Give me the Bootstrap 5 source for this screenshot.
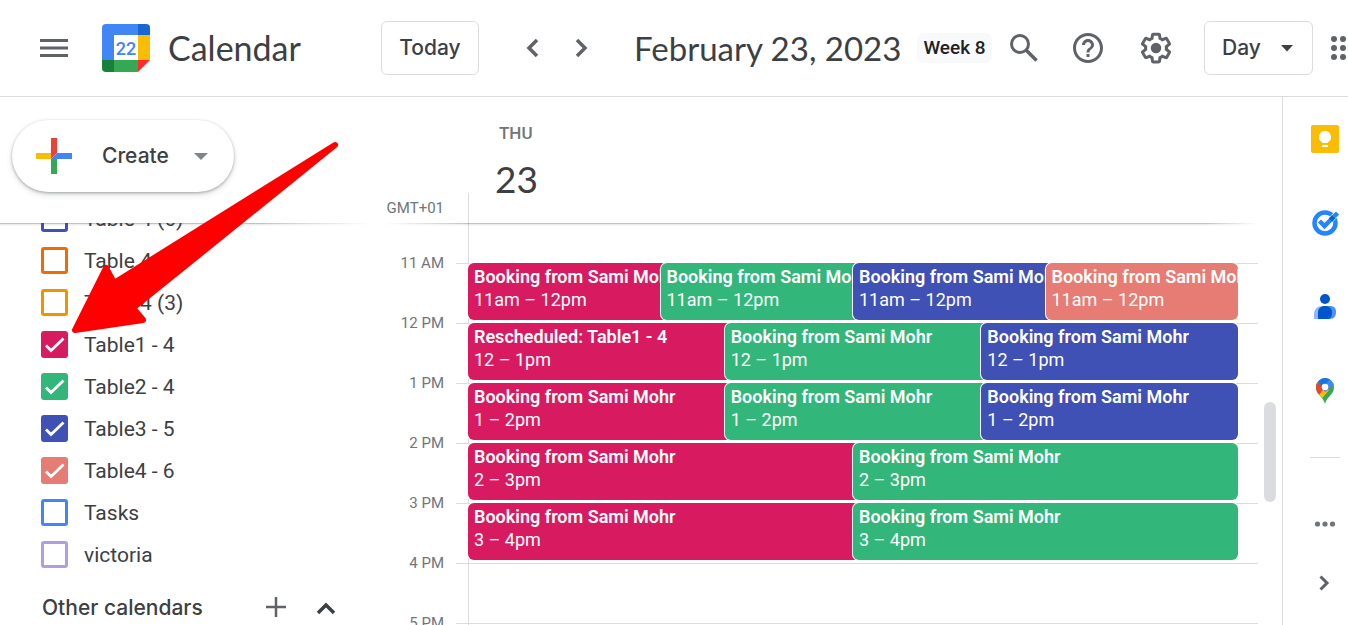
<!DOCTYPE html>
<html lang="en">
<head>
<meta charset="utf-8">
<meta name="viewport" content="width=device-width, initial-scale=1">
<title>Calendar - February 23, 2023</title>
<link href="https://cdn.jsdelivr.net/npm/bootstrap@5.3.0/dist/css/bootstrap.min.css" rel="stylesheet">
<style>
:root{--ink:#3c4043;--soft:#5f6368;--mute:#70757a;--line:#dadce0;--pink:#d81b60;--green:#33b679;--indigo:#3f51b5;--coral:#e67c73}
body{font-family:Roboto,"Liberation Sans",sans-serif;color:var(--ink);height:100vh;background:#fff}
.brand-font{font-family:Lato,Roboto,sans-serif}
.plain{border:0;background:none;padding:0;display:flex;align-items:center;justify-content:center;color:var(--soft);flex:none}
svg{display:block;flex:none}
.topbar{height:97px;border-bottom:1px solid var(--line)}
.top-left{width:381px;padding-left:36px}
.headline{font-size:34px;line-height:48px;white-space:nowrap;font-weight:400}
h1.headline{font-size:33px}
.outlined,.create,.other h2{font-family:Inter,Roboto,sans-serif;font-size:21px;font-weight:500}
.outlined{height:54px;border:1px solid var(--line);border-radius:6px;background:#fff;color:var(--ink)}
.today{width:98px}
.week{font-size:19px;line-height:30px;font-weight:500;background:#f8f9fa;border-radius:6px;padding:0 6px;color:#202124;white-space:nowrap}
.stepper{margin:0 25px 0 30px}
.nav-step{width:48px;height:48px}
.view-select{width:109px;padding:0 17px;appearance:none}
.select-wrap{position:relative;flex:none;margin-left:6px}
.select-wrap svg{position:absolute;right:19px;top:24px;pointer-events:none}
.tools{margin-right:-13px}
.sidebar{width:372px}
.create-zone{height:126px;padding:23px 12px}
.create{width:222px;height:72px;border:0;border-radius:36px;background:#fff;color:var(--ink);box-shadow:0 1px 3px rgba(60,64,67,.4),0 3px 6px rgba(60,64,67,.15)}
.create span{width:92px;margin:0 0 0 30px;text-align:left}
.fade-line{height:3px;flex:none;margin-bottom:-3px;position:relative;z-index:2;background:linear-gradient(rgba(60,64,67,.32) 1px,rgba(60,64,67,.12) 1px,rgba(60,64,67,.02) 3px);-webkit-mask-image:linear-gradient(90deg,#000 70%,transparent)}
.fade-both{-webkit-mask-image:linear-gradient(90deg,transparent 12px,#000 100px,#000 94%,transparent)}
.calendars{margin-top:-26px}
.cal-row{height:42px;padding-left:41px;gap:16px;font-size:21px}
.cal-row .form-check-input{width:27px;height:27px;margin:0;border:3px solid var(--c);border-radius:3px;background-color:#fff;flex:none}
.cal-row .form-check-input:checked{background-color:var(--c);background-origin:border-box;background-size:27px;background-image:url("data:image/svg+xml,%3Csvg xmlns='http://www.w3.org/2000/svg' viewBox='0 0 27 27'%3E%3Cpath d='M5 14.500l5 5L22.500 7.500' fill='none' stroke='%23fff' stroke-width='2.800'/%3E%3C/svg%3E")}
.other{height:66px;padding-left:42px}
.other h2{width:218px}
.gutter{width:96px;flex:none}
.gmt{font-size:15px;color:var(--mute);padding:0 24px 5px 0;line-height:20px}
.day-head{height:126px}
.day-name{font-size:17px;font-weight:500;color:var(--mute);line-height:24px;padding:24px 0 0 30px}
.day-num{font-size:37px;line-height:48px;padding:10px 0 0 26px}
.tick-up{height:30px;width:1px;background:var(--line)}
.hour{height:60px}
.hour-first{height:40px}
.hour-first .slot{border-top:0}
.hour-label{width:84px;flex:none;text-align:right;padding-right:12px;font-size:15px;line-height:20px;margin-top:-10px;color:var(--mute)}
.hour-tick{width:12px;border-top:1px solid var(--line);flex:none}
.slot{border-top:1px solid var(--line);border-left:1px solid var(--line);padding-right:20px;min-width:0}
.slot ul{margin:-1px 0 0 -1px}
.slot li{flex:1 1 0;min-width:0}
.ev{display:block;width:calc(100% + 7px);height:57px;border:0;border-radius:6px;color:#fff;background:var(--c);box-shadow:0 0 0 1px #fff;text-align:left;padding:2px 0 9px 6px;font-size:18px;line-height:23px;overflow:hidden;white-space:nowrap;position:relative}
li:last-child>.ev{width:100%}
.ev b{font-weight:600;display:block}
.scroll-lane{width:24px;flex:none;padding-top:305px}
.thumb{width:12px;height:100px;border-radius:6px;background:var(--line);margin-left:6px}
.rail{width:66px;border-left:1px solid var(--line);padding-top:18px}
.rail .plain{width:48px;height:48px;margin:0 0 36px 18px}
.rail hr{width:30px;margin:6px 0 42px 27px;border-color:var(--line);opacity:1;flex:none}
.pointer{position:absolute;left:0;top:0;pointer-events:none;z-index:3}
.pink{--c:var(--pink)}.green{--c:var(--green)}.indigo{--c:var(--indigo)}.coral{--c:var(--coral)}
</style>
</head>
<body class="d-flex flex-column overflow-hidden position-relative">
<header class="topbar d-flex align-items-center flex-shrink-0">
  <div class="top-left d-flex align-items-center flex-shrink-0">
    <button class="plain" aria-label="Main menu"><svg width="36" height="36" viewBox="0 0 36 36" fill="currentColor"><path d="M4 9h28v3H4zM4 16.500h28v3H4zM4 24h28v3H4z"/></svg></button>
    <svg class="ms-4 me-2" width="60" height="60" viewBox="0 0 60 60"><path d="M6 18V10a4 4 0 0 1 4-4h32v12z" fill="#4285f4"/><path d="M6 17h12v25H6z" fill="#4285f4"/><path d="M18 17h25v26H18z" fill="#fff"/><path d="M42 6h8a4 4 0 0 1 4 4v7H42z" fill="#1967d2"/><path d="M42 17h12v25H42z" fill="#fbbc04"/><path d="M42 42h12L42 54z" fill="#ff2a2a"/><path d="M17 42h25v12H17z" fill="#34a853"/><path d="M6 42h12v12h-8a4 4 0 0 1-4-4z" fill="#188038"/><text x="30" y="37" text-anchor="middle" font-family="Roboto" font-size="18" font-weight="500" fill="#4285f4">22</text></svg>
    <span class="headline brand-font ms-1">Calendar</span>
  </div>
  <button class="outlined today p-0 flex-shrink-0">Today</button>
  <div class="stepper d-flex">
    <button class="plain nav-step" aria-label="Previous day"><svg width="36" height="36" viewBox="0 0 36 36" fill="none" stroke="currentColor" stroke-width="3.500"><path d="M22 10l-8 8 8 8"/></svg></button>
    <button class="plain nav-step" aria-label="Next day"><svg width="36" height="36" viewBox="0 0 36 36" fill="none" stroke="currentColor" stroke-width="3.500"><path d="M14 10l8 8-8 8"/></svg></button>
  </div>
  <h1 class="headline brand-font mb-0 ms-1 me-3">February 23, 2023</h1>
  <span class="week">Week 8</span>
  <div class="tools d-flex align-items-center ms-auto flex-shrink-0">
    <button class="plain" aria-label="Search"><svg width="36" height="36" viewBox="0 0 36 36" fill="none" stroke="currentColor"><circle cx="14" cy="14" r="8.500" stroke-width="3"/><path d="M20 20l10.500 10.500" stroke-width="3.500"/></svg></button>
    <button class="plain ms-4 ps-1" aria-label="Support"><svg width="36" height="36" viewBox="0 0 24 24" fill="currentColor"><path d="M11 18h2v-2h-2v2zm1-16C6.480 2 2 6.480 2 12s4.480 10 10 10 10-4.480 10-10S17.520 2 12 2zm0 18c-4.410 0-8-3.590-8-8s3.590-8 8-8 8 3.590 8 8-3.590 8-8 8zm0-14c-2.210 0-4 1.790-4 4h2c0-1.100.9-2 2-2s2 .9 2 2c0 2-3 1.750-3 5h2c0-2.250 3-2.500 3-5 0-2.210-1.790-4-4-4z"/></svg></button>
    <button class="plain ms-4 ps-2 me-4" aria-label="Settings"><svg width="36" height="36" viewBox="0 0 24 24" fill="currentColor"><path d="M13.850 22.250h-3.700c-.74 0-1.360-.54-1.450-1.270l-.27-1.890c-.27-.14-.53-.29-.79-.46l-1.800.72c-.7.260-1.470-.03-1.810-.65L2.200 15.530c-.35-.66-.2-1.440.36-1.880l1.530-1.190c-.01-.15-.02-.3-.02-.46 0-.15.010-.31.020-.46l-1.520-1.190c-.59-.45-.74-1.260-.37-1.880l1.850-3.190c.34-.62 1.110-.9 1.790-.63l1.810.73c.26-.17.520-.32.780-.46l.27-1.910c.09-.7.710-1.250 1.440-1.250h3.700c.74 0 1.360.54 1.450 1.270l.27 1.890c.27.140.53.290.79.460l1.800-.72c.71-.26 1.480.03 1.820.65l1.840 3.180c.36.660.2 1.440-.36 1.880l-1.520 1.190c.1.150.2.300.2.460s-.1.310-.2.460l1.520 1.190c.56.450.72 1.230.37 1.860l-1.860 3.220c-.34.620-1.110.9-1.800.63l-1.800-.72c-.26.170-.52.320-.78.460l-.27 1.910c-.1.680-.72 1.220-1.460 1.220zm-3.230-2h2.760l.37-2.550.53-.22c.44-.18.880-.44 1.340-.78l.45-.34 2.380.96 1.380-2.400-2.030-1.580.07-.56c.03-.26.060-.51.060-.78s-.03-.53-.06-.78l-.07-.56 2.030-1.580-1.390-2.400-2.390.96-.45-.35c-.42-.32-.87-.58-1.330-.77l-.52-.22-.37-2.550h-2.760l-.37 2.550-.53.210c-.44.190-.88.440-1.340.79l-.45.330-2.380-.95-1.390 2.390 2.030 1.580-.07.560a7 7 0 0 0-.06.790c0 .26.020.53.060.78l.07.560-2.030 1.580 1.380 2.400 2.390-.96.450.35c.43.330.86.580 1.330.77l.53.220z"/><circle cx="12" cy="12" r="3.500"/></svg></button>
    <div class="select-wrap"><select class="outlined view-select" aria-label="View"><option>Day</option><option>Week</option><option>Month</option></select><svg width="14" height="7" viewBox="0 0 14 7"><path d="M1 0h12L7 6.500z" fill="#3c4043"/></svg></div>
    <button class="plain ms-2 ps-1" aria-label="Google apps"><svg width="36" height="36" viewBox="0 0 24 24" fill="currentColor"><circle cx="6" cy="6" r="2"/><circle cx="12" cy="6" r="2"/><circle cx="18" cy="6" r="2"/><circle cx="6" cy="12" r="2"/><circle cx="12" cy="12" r="2"/><circle cx="18" cy="12" r="2"/><circle cx="6" cy="18" r="2"/><circle cx="12" cy="18" r="2"/><circle cx="18" cy="18" r="2"/></svg></button>
  </div>
</header>

<div class="d-flex flex-grow-1" style="min-height:0">
  <aside class="sidebar d-flex flex-column flex-shrink-0">
    <div class="create-zone flex-shrink-0">
      <button class="create d-flex align-items-center p-0"><svg class="ms-4" width="36" height="36" viewBox="0 0 36 36"><path d="M15 0h6v15l-6 6z" fill="#ea4335"/><path d="M0 15h15v6H0z" fill="#fbbc04"/><path d="M15 21h6v15h-6z" fill="#34a853"/><path d="M21 15h15v6H15z" fill="#4285f4"/></svg><span>Create</span><svg width="14" height="7" viewBox="0 0 14 7"><path d="M0 0h14L7 7z" fill="#80868b"/></svg></button>
    </div>
    <div class="fade-line"></div>
    <div class="overflow-hidden flex-grow-1">
      <div class="calendars">
        <label class="cal-row d-flex align-items-center" style="--c:#3f51b5"><input class="form-check-input" type="checkbox"><span class="pt-1">Table 4 (6)</span></label>
        <label class="cal-row d-flex align-items-center" style="--c:#ef6c00"><input class="form-check-input" type="checkbox"><span class="pt-1">Table 4</span></label>
        <label class="cal-row d-flex align-items-center" style="--c:#f09300"><input class="form-check-input" type="checkbox"><span class="pt-1">Table 4 (3)</span></label>
        <label class="cal-row pink d-flex align-items-center"><input class="form-check-input" type="checkbox" checked><span class="pt-1">Table1 - 4</span></label>
        <label class="cal-row green d-flex align-items-center"><input class="form-check-input" type="checkbox" checked><span class="pt-1">Table2 - 4</span></label>
        <label class="cal-row indigo d-flex align-items-center"><input class="form-check-input" type="checkbox" checked><span class="pt-1">Table3 - 5</span></label>
        <label class="cal-row coral d-flex align-items-center"><input class="form-check-input" type="checkbox" checked><span class="pt-1">Table4 - 6</span></label>
        <label class="cal-row d-flex align-items-center" style="--c:#4285f4"><input class="form-check-input" type="checkbox"><span class="pt-1">Tasks</span></label>
        <label class="cal-row d-flex align-items-center" style="--c:#b39ddb"><input class="form-check-input" type="checkbox"><span class="pt-1">victoria</span></label>
        <div class="other d-flex align-items-center"><h2 class="mb-0">Other calendars</h2>
          <button class="plain" aria-label="Add other calendars"><svg width="32" height="32" viewBox="0 0 32 32" stroke="currentColor" stroke-width="2.500"><path d="M16 5v20M6 15h20"/></svg></button>
          <button class="plain ms-3" aria-label="Collapse"><svg width="36" height="36" viewBox="0 0 36 36" fill="none" stroke="#3c4043" stroke-width="3.500"><path d="M10 23l8-8 8 8"/></svg></button>
        </div>
      </div>
    </div>
  </aside>

  <main class="d-flex flex-grow-1" style="min-width:0">
    <div class="d-flex flex-column flex-grow-1" style="min-width:0">
      <div class="day-head d-flex flex-shrink-0">
        <div class="gutter gmt d-flex align-items-end justify-content-end">GMT+01</div>
        <div class="tick-up align-self-end"></div>
        <div><div class="day-name">THU</div><div class="day-num brand-font">23</div></div>
      </div>
      <div class="fade-line fade-both"></div>
      <div class="overflow-hidden flex-grow-1">
        <div class="hour hour-first d-flex"><div class="gutter"></div><div class="slot flex-grow-1"></div></div>
        <div class="hour d-flex"><div class="hour-label">11 AM</div><div class="hour-tick"></div><div class="slot flex-grow-1"><ul class="list-unstyled d-flex">
          <li><button class="ev pink"><b>Booking from Sami Mohr</b>11am – 12pm</button></li>
          <li><button class="ev green"><b>Booking from Sami Mohr</b>11am – 12pm</button></li>
          <li><button class="ev indigo"><b>Booking from Sami Mohr</b>11am – 12pm</button></li>
          <li><button class="ev coral"><b>Booking from Sami Mohr</b>11am – 12pm</button></li></ul></div></div>
        <div class="hour d-flex"><div class="hour-label">12 PM</div><div class="hour-tick"></div><div class="slot flex-grow-1"><ul class="list-unstyled d-flex">
          <li><button class="ev pink"><b>Rescheduled: Table1 - 4</b>12 – 1pm</button></li>
          <li><button class="ev green"><b>Booking from Sami Mohr</b>12 – 1pm</button></li>
          <li><button class="ev indigo"><b>Booking from Sami Mohr</b>12 – 1pm</button></li></ul></div></div>
        <div class="hour d-flex"><div class="hour-label">1 PM</div><div class="hour-tick"></div><div class="slot flex-grow-1"><ul class="list-unstyled d-flex">
          <li><button class="ev pink"><b>Booking from Sami Mohr</b>1 – 2pm</button></li>
          <li><button class="ev green"><b>Booking from Sami Mohr</b>1 – 2pm</button></li>
          <li><button class="ev indigo"><b>Booking from Sami Mohr</b>1 – 2pm</button></li></ul></div></div>
        <div class="hour d-flex"><div class="hour-label">2 PM</div><div class="hour-tick"></div><div class="slot flex-grow-1"><ul class="list-unstyled d-flex">
          <li><button class="ev pink"><b>Booking from Sami Mohr</b>2 – 3pm</button></li>
          <li><button class="ev green"><b>Booking from Sami Mohr</b>2 – 3pm</button></li></ul></div></div>
        <div class="hour d-flex"><div class="hour-label">3 PM</div><div class="hour-tick"></div><div class="slot flex-grow-1"><ul class="list-unstyled d-flex">
          <li><button class="ev pink"><b>Booking from Sami Mohr</b>3 – 4pm</button></li>
          <li><button class="ev green"><b>Booking from Sami Mohr</b>3 – 4pm</button></li></ul></div></div>
        <div class="hour d-flex"><div class="hour-label">4 PM</div><div class="hour-tick"></div><div class="slot flex-grow-1"></div></div>
        <div class="hour d-flex"><div class="hour-label">5 PM</div><div class="hour-tick"></div><div class="slot flex-grow-1"></div></div>
      </div>
    </div>
    <div class="scroll-lane"><div class="thumb"></div></div>
  </main>

  <nav class="rail d-flex flex-column flex-shrink-0 overflow-hidden" aria-label="Side panel">
    <button class="plain" aria-label="Keep"><svg width="28" height="28" viewBox="0 0 28 28"><rect width="28" height="28" rx="2" fill="#fbbc04"/><path d="M14 6a6 6 0 0 0-3 11.200V18h6v-.8A6 6 0 0 0 14 6zM11 20h6v2h-6z" fill="#fff"/></svg></button>
    <button class="plain" aria-label="Tasks"><svg width="28" height="28" viewBox="0 0 28 28" fill="none"><circle cx="14" cy="14" r="10.500" stroke="#2684fc" stroke-width="4.500"/><path d="M8.500 12l5 5L26 4.500" stroke="#fff" stroke-width="6"/><path d="M8.500 12l5 5L21 9.500" stroke="#2684fc" stroke-width="4.500"/><path d="M19.500 11L23 7.500" stroke="#0066da" stroke-width="4.800"/><path d="M23 7.500L26.500 4" stroke="#2684fc" stroke-width="4.500"/></svg></button>
    <button class="plain" aria-label="Contacts"><svg width="28" height="28" viewBox="0 0 28 28"><path d="M3 26v-5a8 8 0 0 1 8-8h6v13z" fill="#91b5ff"/><path d="M12 13h7c4 0 6 2 6 6s-2 7-6 7h-7z" fill="#4f8df7"/><path d="M7 20c0-5 3-7 7-7s7 2 7 7c0 4-2 6-5 6H7z" fill="#0057cc"/><circle cx="14" cy="6" r="5" fill="#0057cc"/></svg></button>
    <button class="plain" aria-label="Maps"><svg width="28" height="28" viewBox="0 0 28 28"><defs><clipPath id="pin"><path d="M14 1a9 9 0 0 1 9 9c0 8-7 9-9 17C12 19 5 18 5 10a9 9 0 0 1 9-9z"/></clipPath></defs><g clip-path="url(#pin)"><path d="M0 0h28v28H0z" fill="#34a853"/><path d="M0 24V15l7-2 7-3 4 3L8 25z" fill="#fbbc04"/><path d="M3 17V3l11 7-6 8z" fill="#ea4335"/><path d="M7 4l7-5 6 3-8 10z" fill="#1a73e8"/><path d="M20 1l6 4-12 10-3-4z" fill="#4285f4"/></g><circle cx="14" cy="10" r="3.300" fill="#fff"/></svg></button>
    <hr>
    <button class="plain m-0 ms-3 ps-1" aria-label="Get add-ons"><svg width="24" height="24" viewBox="0 0 24 24" fill="#70757a"><circle cx="4.500" cy="12" r="2.600"/><circle cx="12" cy="12" r="2.600"/><circle cx="19.500" cy="12" r="2.600"/></svg></button>
    <button class="plain m-0 mt-2 ms-3 pt-1" aria-label="Hide side panel"><svg width="24" height="24" viewBox="0 0 24 24" fill="none" stroke="currentColor" stroke-width="3"><path d="M9.500 6.500L16 13l-6.500 6.500"/></svg></button>
  </nav>
</div>

<svg class="pointer" width="360" height="345" viewBox="0 0 360 345"><path d="M335 145L114 283 106 268 75 330 143 320 133 308z" fill="#f00" stroke="#f00" stroke-width="6" stroke-linejoin="round"/></svg>
<script src="https://cdn.jsdelivr.net/npm/bootstrap@5.3.0/dist/js/bootstrap.bundle.min.js"></script>
</body>
</html>
